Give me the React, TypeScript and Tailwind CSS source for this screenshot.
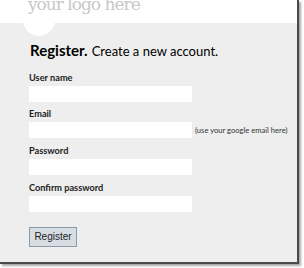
export default function App() {
  const label = "block h-[12px] text-[9.2px] font-bold text-[#222] leading-[12px] whitespace-nowrap";
  const input = "block w-[163px] h-[16px] bg-white shrink-0";
  return (
    <div className="w-[304px] h-[268px] bg-white" style={{ fontFamily: 'Lato, sans-serif' }}>
      <div className="relative w-[299px] h-[264px] flex flex-col border-r-2 border-b-2 border-[#4a4a4a] shadow-[2px_2px_2px_rgba(0,0,0,0.35)] bg-[#eeeeee] overflow-hidden">
        <div className="absolute left-[23px] top-[4px] w-[32px] h-[32px] rounded-full bg-white" />
        <div className="relative h-[23px] shrink-0 bg-white overflow-hidden pl-[28px]">
          <div className="text-[17px] leading-[17px] tracking-[-1px] text-[#c8c8c8] -mt-[4px] whitespace-nowrap" style={{ fontFamily: '"DejaVu Serif", serif' }}>
            your logo here
          </div>
        </div>
        <div className="relative flex flex-col pl-[29px] pt-[17px]">
          <div className="pl-[1px] h-[20px] leading-[20px] text-black whitespace-nowrap">
            <span className="font-bold text-[15px]">Register.</span>{" "}
            <span className="text-[13px]">Create a new account.</span>
          </div>
          <div className="flex flex-col">
            <label className={label + " mt-[12px]"}>User name</label>
            <div className="mt-[2px] flex items-center">
              <div className={input} />
            </div>
            <label className={label + " mt-[6px]"}>Email</label>
            <div className="mt-[2px] flex items-center">
              <div className={input} />
              <span className="ml-[3px] text-[7.6px] leading-[10px] text-[#333] whitespace-nowrap">(use your google email here)</span>
            </div>
            <label className={label + " mt-[7px]"}>Password</label>
            <div className="mt-[2px] flex items-center">
              <div className={input} />
            </div>
            <label className={label + " mt-[7px]"}>Confirm password</label>
            <div className="mt-[2px] flex items-center">
              <div className={input} />
            </div>
            <div className="mt-[15px]">
              <button className="block w-[48px] h-[20px] bg-[#d6dde3] border border-[#8c9aa6] text-[10px] leading-[18px] text-[#222]" style={{ fontFamily: '"Liberation Sans", Arial, sans-serif' }}>
                Register
              </button>
            </div>
          </div>
        </div>
      </div>
    </div>
  );
}
